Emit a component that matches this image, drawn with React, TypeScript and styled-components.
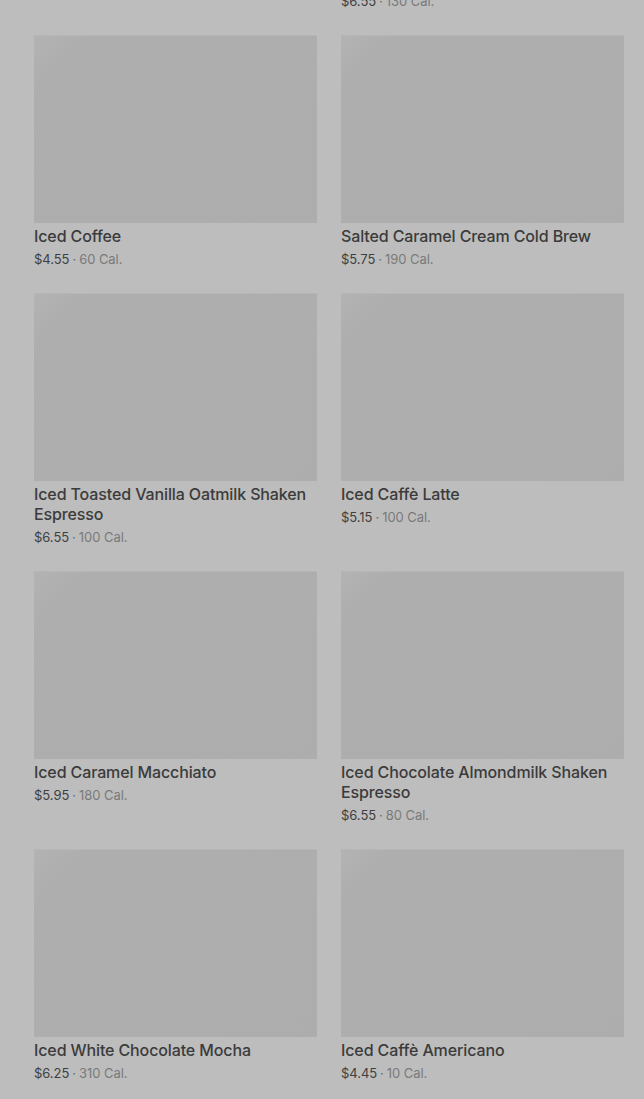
import React from "react";
import styled, { createGlobalStyle } from "styled-components";

const Global = createGlobalStyle`
  html, body { margin: 0; padding: 0; background: #bdbdbd; }
  body { font-family: "Inter", "Roboto", sans-serif; overflow: hidden; }
`;

const Page = styled.div`
  height: 1099px;
  overflow: hidden;
  background: #bdbdbd;
`;

const Grid = styled.div`
  display: grid;
  grid-template-columns: 283px 283px;
  column-gap: 24px;
  row-gap: 24px;
  padding: 0 20px 0 34px;
  margin-top: -9px;
  align-items: start;
`;

const Card = styled.div`
  display: flex;
  flex-direction: column;
`;

const Thumb = styled.div`
  height: 188px;
  background: linear-gradient(135deg, #b3b3b3 0%, #aeaeae 12%, #adadad 100%);
  box-shadow: inset 0 1px 0 #b6b6b6;
  margin-bottom: 3px;
`;

const Title = styled.div`
  font-size: 16px;
  line-height: 20px;
  font-weight: 500;
  color: #3b3b3b;
  letter-spacing: -0.12px;
`;

const Meta = styled.div<{ $flush?: boolean }>`
  margin-top: ${(p) => (p.$flush ? "0" : "3px")};
  font-size: 13px;
  line-height: 20px;
  color: #3f3f3f;
  letter-spacing: -0.05px;
`;

const Cal = styled.span`
  color: #7a7a7a;
`;

const Dot = styled.span`
  color: #6a6a6a;
  margin: 0 3px;
`;

const items = [
  { name: "Iced Coffee", price: "$4.55", cal: "60" },
  { name: "Salted Caramel Cream Cold Brew", price: "$5.75", cal: "190" },
  { name: "Iced Toasted Vanilla Oatmilk Shaken Espresso", price: "$6.55", cal: "100" },
  { name: "Iced Caffè Latte", price: "$5.15", cal: "100" },
  { name: "Iced Caramel Macchiato", price: "$5.95", cal: "180" },
  { name: "Iced Chocolate Almondmilk Shaken Espresso", price: "$6.55", cal: "80" },
  { name: "Iced White Chocolate Mocha", price: "$6.25", cal: "310" },
  { name: "Iced Caffè Americano", price: "$4.45", cal: "10" },
];

export default function App() {
  return (
    <Page>
      <Global />
      <Grid>
        <Card />
        <Card>
          <Meta $flush>
            $6.55
            <Dot>·</Dot>
            <Cal>130 Cal.</Cal>
          </Meta>
        </Card>
        {items.map((it) => (
          <Card key={it.name}>
            <Thumb />
            <Title>{it.name}</Title>
            <Meta>
              {it.price}
              <Dot>·</Dot>
              <Cal>{it.cal} Cal.</Cal>
            </Meta>
          </Card>
        ))}
      </Grid>
    </Page>
  );
}
